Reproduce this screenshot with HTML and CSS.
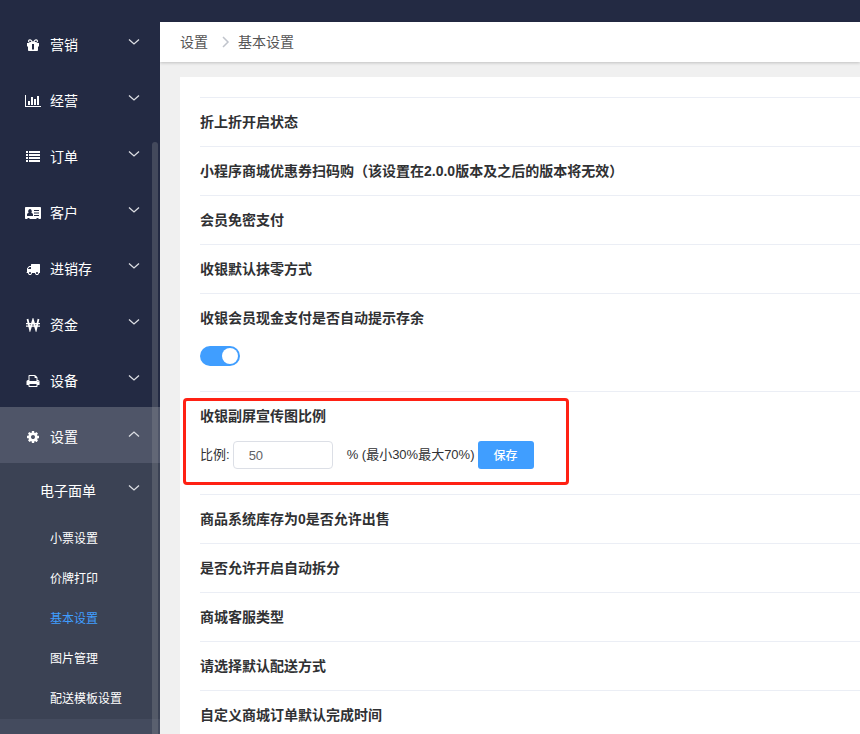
FILE: index.html
```
<!DOCTYPE html>
<html lang="zh-CN">
<head>
<meta charset="utf-8">
<meta name="viewport" content="width=device-width, initial-scale=1">
<title>基本设置</title>
<link rel="stylesheet" href="styles.css">
</head>
<body>
<svg class="defs" aria-hidden="true">
  <symbol id="chevron" viewBox="0 0 12 12"><path d="M1 1.500l5 4.500 5-4.500" fill="none" stroke="currentColor" stroke-width="1.300"/></symbol>
  <symbol id="chevron-up" viewBox="0 0 12 12"><path d="M1 6.500l5-4.500 5 4.500" fill="none" stroke="currentColor" stroke-width="1.300"/></symbol>
</svg>
<div class="app">
  <aside class="sidebar">
    <nav class="menu">
      <button class="menu-item" type="button">
        <svg class="icon" viewBox="0 0 18 14"><path fill-rule="evenodd" d="M3 5h3.600C4.500 5 4 4 4 3.100 4 2 4.800 1.200 5.800 1.200c.9 0 1.500.4 2 1.100L9 3.800l1.200-1.500c.5-.7 1.100-1.100 2-1.100 1 0 1.800.8 1.800 1.900 0 .9-.5 1.900-2.600 1.900H15v3.500h-1v3.600c0 .5-.3.900-.8.900H4.800c-.5 0-.8-.4-.8-.9V8.500H3zM5.800 2.400c-1 0-1 1.500 0 1.500h1.700l-.9-1.100c-.2-.3-.5-.4-.8-.4zm6.400 0c-.3 0-.6.1-.8.4l-.9 1.100h1.700c1 0 1-1.500 0-1.500zM8 6v5.500h2V6z"/></svg>
        <span class="menu-text">营销</span><svg class="arrow"><use href="#chevron"/></svg>
      </button>
      <button class="menu-item" type="button">
        <svg class="icon" viewBox="0 0 18 14"><path d="M1 1h1v11h15v1H1zM4 7h2v4H4zM7 3h2v8H7zM10 5h2v6h-2zM13 2h2v9h-2z"/></svg>
        <span class="menu-text">经营</span><svg class="arrow"><use href="#chevron"/></svg>
      </button>
      <button class="menu-item" type="button">
        <svg class="icon" viewBox="0 0 18 14"><path d="M2 1h2v2H2zm3 0h11v2H5zM2 4h2v2H2zm3 0h11v2H5zM2 7h2v2H2zm3 0h11v2H5zM2 10h2v2H2zm3 0h11v2H5z"/></svg>
        <span class="menu-text">订单</span><svg class="arrow"><use href="#chevron"/></svg>
      </button>
      <button class="menu-item" type="button">
        <svg class="icon" viewBox="0 0 18 14"><path fill-rule="evenodd" d="M2 1h14c.6 0 1 .4 1 1v10c0 .6-.4 1-1 1h-1.500v-1h-2v1h-7v-1h-2v1H2c-.6 0-1-.4-1-1V2c0-.6.4-1 1-1zm1 9h6V8.500C9 7.600 8.300 7 7.300 7c.3-.4.500-.9.500-1.500C7.800 4.200 7 3 6 3S4.200 4.200 4.200 5.500c0 .6.200 1.100.5 1.500C3.700 7 3 7.600 3 8.500zm7-6v1h5V4zm0 2.500v1h5v-1zM10 9v1h5V9z"/></svg>
        <span class="menu-text">客户</span><svg class="arrow"><use href="#chevron"/></svg>
      </button>
      <button class="menu-item" type="button">
        <svg class="icon" viewBox="-256 0 2304 1792"><path d="M640 1408q0-52-38-90t-90-38-90 38-38 90 38 90 90 38 90-38 38-90zm-384-512h384v-256h-158q-13 0-22 9l-195 195q-9 9-9 22v30zm1280 512q0-52-38-90t-90-38-90 38-38 90 38 90 90 38 90-38 38-90zm256-1088v1024q0 15-4 26.500t-13.500 18.500-16.500 11.500-23.500 6-22.500 2-25.500 0-22.500-.5q0 106-75 181t-181 75-181-75-75-181h-384q0 106-75 181t-181 75-181-75-75-181h-64q-3 0-22.500.5t-25.500 0-22.500-2-23.500-6-16.500-11.500-13.500-18.500-4-26.500q0-26 19-45t45-19v-320q0-8-.5-35t0-38 2.500-34.500 6.500-37 14-30.500 22.500-30l198-198q19-19 50.500-32t58.500-13h160v-192q0-26 19-45t45-19h1024q26 0 45 19t19 45z"/></svg>
        <span class="menu-text">进销存</span><svg class="arrow"><use href="#chevron"/></svg>
      </button>
      <button class="menu-item" type="button">
        <svg class="icon" viewBox="0 0 18 14"><path d="M3.500 1l2.500 10.500L9 2l3 9.500L14.500 1" fill="none" stroke="currentColor" stroke-width="1.800"/><path d="M2 5h14v1.300H2zM2 7.500h14v1.300H2z"/></svg>
        <span class="menu-text">资金</span><svg class="arrow"><use href="#chevron"/></svg>
      </button>
      <button class="menu-item" type="button">
        <svg class="icon" viewBox="-256 0 2304 1792"><path d="M448 1536h896v-256h-896v256zm0-640h896v-384h-160q-40 0-68-28t-28-68v-160h-640v640zm1152 64q0-26-19-45t-45-19-45 19-19 45 19 45 45 19 45-19 19-45zm128 0v416q0 13-9.500 22.500t-22.500 9.500h-224v160q0 40-28 68t-68 28h-960q-40 0-68-28t-28-68v-160h-224q-13 0-22.500-9.500t-9.500-22.500v-416q0-79 56.500-135.500t135.500-56.500h64v-544q0-40 28-68t68-28h672q40 0 88 20t76 48l152 152q28 28 48 76t20 88v256h64q79 0 135.500 56.500t56.500 135.500z"/></svg>
        <span class="menu-text">设备</span><svg class="arrow"><use href="#chevron"/></svg>
      </button>
      <button class="menu-item open" type="button" aria-expanded="true">
        <svg class="icon" viewBox="-256 0 2304 1792"><path d="M1152 896q0-106-75-181t-181-75-181 75-75 181 75 181 181 75 181-75 75-181zm512-109v222q0 12-8 23t-20 13l-185 28q-19 54-39 91 35 50 107 138 10 12 10 25t-9 23q-27 37-99 108t-94 71q-12 0-26-9l-138-108q-44 23-91 38-16 136-29 186-7 28-36 28h-222q-14 0-24.500-8.500t-11.500-21.500l-28-184q-49-16-90-37l-141 107q-10 9-25 9-14 0-25-11-126-114-165-168-7-10-7-23 0-12 8-23 15-21 51-66.500t54-70.500q-27-50-41-99l-183-27q-13-2-21-12.500t-8-23.500v-222q0-12 8-23t19-13l186-28q14-46 39-92-40-57-107-138-10-12-10-24 0-10 9-23 26-36 98.500-107.500t94.500-71.500q13 0 26 10l138 107q44-23 91-38 16-136 29-186 7-28 36-28h222q14 0 24.500 8.500t11.500 21.500l28 184q49 16 90 37l142-107q9-9 24-9 13 0 25 10 129 119 165 170 7 8 7 22 0 12-8 23-15 21-51 66.500t-54 70.500q26 50 41 98l183 28q13 2 21 12.500t8 23.500z"/></svg>
        <span class="menu-text">设置</span><svg class="arrow"><use href="#chevron-up"/></svg>
      </button>
      <div class="submenu">
        <button class="menu-item submenu-title" type="button"><span class="menu-text">电子面单</span><svg class="arrow"><use href="#chevron"/></svg></button>
        <a class="sub-link" href="#">小票设置</a>
        <a class="sub-link" href="#">价牌打印</a>
        <a class="sub-link current" href="#" aria-current="page">基本设置</a>
        <a class="sub-link" href="#">图片管理</a>
        <a class="sub-link" href="#">配送模板设置</a>
        <div class="sub-next"></div>
      </div>
    </nav>
    <div class="scroll-thumb"></div>
  </aside>
  <div class="page">
    <header class="topbar"></header>
    <nav class="breadcrumb" aria-label="面包屑">
      <a href="#">设置</a>
      <svg class="separator" viewBox="0 0 8 12"><path d="M1 1l5 5-5 5" fill="none" stroke="currentColor" stroke-width="1.500"/></svg>
      <span>基本设置</span>
    </nav>
    <main class="content">
      <div class="card">
        <section class="setting"><h2>折上折开启状态</h2></section>
        <section class="setting"><h2>小程序商城优惠券扫码购（该设置在2.0.0版本及之后的版本将无效）</h2></section>
        <section class="setting"><h2>会员免密支付</h2></section>
        <section class="setting"><h2>收银默认抹零方式</h2></section>
        <section class="setting">
          <h2 id="cash-title">收银会员现金支付是否自动提示存余</h2>
          <div class="switch-row"><input class="switch" type="checkbox" role="switch" aria-labelledby="cash-title" checked></div>
        </section>
        <section class="setting highlighted">
          <h2>收银副屏宣传图比例</h2>
          <form class="ratio-row">
            <label class="ratio-label" for="ratio">比例:</label>
            <input class="ratio-input" id="ratio" type="text" value="50">
            <span class="ratio-label">% (最小30%最大70%)</span>
            <button class="save" type="button">保存</button>
          </form>
        </section>
        <section class="setting"><h2>商品系统库存为0是否允许出售</h2></section>
        <section class="setting"><h2>是否允许开启自动拆分</h2></section>
        <section class="setting"><h2>商城客服类型</h2></section>
        <section class="setting"><h2>请选择默认配送方式</h2></section>
        <section class="setting"><h2>自定义商城订单默认完成时间</h2></section>
      </div>
    </main>
  </div>
</div>
</body>
</html>
```
FILE: styles.css
```
*,
*::before,
*::after { box-sizing: border-box; }

body {
  margin: 0;
  font-family: "Liberation Sans", "Noto Sans CJK SC", sans-serif;
  font-size: 14px;
  color: #303133;
}

button, input { font-family: inherit; }
a { color: inherit; text-decoration: none; }

.defs { display: none; }

.app {
  display: grid;
  grid-template-columns: 160px 1fr;
  height: 100vh;
  overflow: hidden;
}

/* Sidebar */
.sidebar {
  position: relative;
  overflow: hidden;
  padding-top: 15px;
  background: #232a43;
  color: #fff;
}

.menu-item {
  display: flex;
  align-items: center;
  gap: 8px;
  width: 100%;
  height: 56px;
  padding: 2px 20px 0 24px;
  border: 0;
  background: none;
  color: inherit;
  font-size: 14px;
  text-align: left;
}

.menu-item.open { background: #4f5568; }

.menu-item.submenu-title {
  padding-top: 0;
  padding-bottom: 2px;
  padding-left: 40px;
}

.menu-text { flex: 1; }

.icon {
  width: 18px;
  height: 14px;
  margin-top: 1px;
  fill: currentColor;
}

.arrow {
  width: 12px;
  height: 12px;
  margin-bottom: 1px;
  color: #dcdee3;
}

.submenu { background: #3b4254; }

.sub-link {
  display: block;
  padding-left: 50px;
  font-size: 12px;
  line-height: 40px;
}

.sub-link.current { color: #409eff; }

.sub-next {
  height: 40px;
  background: #444b5e;
}

.scroll-thumb {
  position: absolute;
  top: 142px;
  right: 2px;
  bottom: 0;
  width: 6px;
  border-radius: 3px 3px 0 0;
  background: rgba(144, 147, 153, 0.3);
}

/* Page */
.page {
  display: flex;
  flex-direction: column;
  min-width: 0;
  overflow: hidden;
  background: #f0f0f0;
}

.topbar {
  flex: none;
  height: 22px;
  background: #232a43;
}

.breadcrumb {
  display: flex;
  flex: none;
  align-items: center;
  height: 40px;
  padding: 0 20px 2px;
  background: #fff;
  box-shadow: 0 1px 3px rgba(0, 0, 0, 0.2);
  color: #555;
}

.separator {
  width: 8px;
  height: 12px;
  margin: 2px 8px 0 14px;
  color: #c0c4cc;
}

.content {
  flex: 1;
  min-height: 0;
  padding: 15px 0 0 20px;
}

.card {
  padding: 20px 0 20px 20px;
  background: #fff;
}

.setting { border-top: 1px solid #ebeef5; }

.setting h2 {
  margin: 0;
  font-size: 14px;
  line-height: 48px;
}

.switch-row {
  display: flex;
  padding: 4px 0 25px;
}

.switch {
  display: flex;
  align-items: center;
  justify-content: flex-end;
  width: 40px;
  height: 20px;
  margin: 0;
  padding: 2px;
  border-radius: 10px;
  background: #409eff;
  appearance: none;
}

.switch::before {
  content: "";
  width: 16px;
  height: 16px;
  border-radius: 50%;
  background: #fff;
}

.highlighted { position: relative; }

/* Callout frame drawn around the setting */
.highlighted::after {
  content: "";
  position: absolute;
  top: 6px;
  left: -17px;
  width: 386px;
  height: 87px;
  border: 3px solid #ff2114;
  border-radius: 4px;
  pointer-events: none;
}

.ratio-row {
  display: flex;
  align-items: center;
  padding: 1px 0 25px;
}

.ratio-label {
  padding-bottom: 3px;
  font-size: 13px;
  white-space: nowrap;
}

.ratio-input {
  width: 100px;
  height: 28px;
  margin: 0 14px 0 3px;
  padding: 0 15px;
  border: 1px solid #dcdfe6;
  border-radius: 4px;
  color: #606266;
  font-size: 13px;
}

.save {
  width: 56px;
  height: 28px;
  margin-left: 3px;
  padding: 0 0 2px;
  border: 0;
  border-radius: 3px;
  background: #409eff;
  color: #fff;
  font-size: 12px;
  font-weight: 500;
}
```
